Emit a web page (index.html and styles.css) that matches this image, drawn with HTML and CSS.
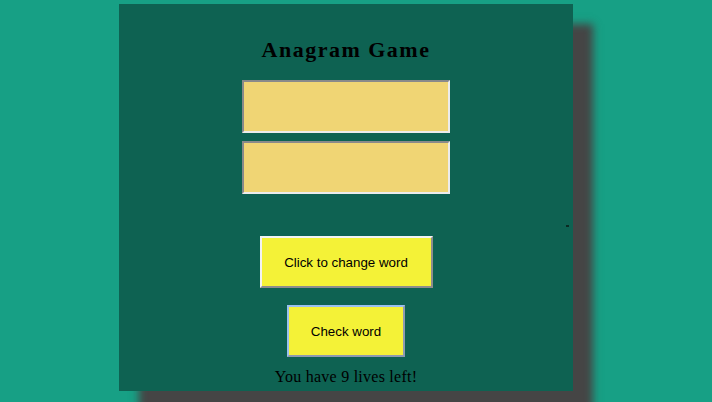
FILE: index.html
```html
<!DOCTYPE html>
<html>
<head>
<meta charset="utf-8">
<link rel="stylesheet" href="styles.css">
</head>
<body>
<div class="panel">
  <h1 class="title">Anagram Game</h1>
  <input class="field" type="text">
  <input class="field second" type="text">
  <button class="btn change">Click to change word</button>
  <button class="btn check">Check word</button>
  <p class="lives">You have 9 lives left!</p>
  <span class="dot"></span>
</div>
</body>
</html>
```
FILE: styles.css
```css
html, body {
  margin: 0;
  padding: 0;
}
body {
  background: #17a085;
  width: 712px;
  height: 402px;
  overflow: hidden;
  font-family: "Liberation Serif", "Times New Roman", serif;
}
.panel {
  position: relative;
  box-sizing: border-box;
  margin: 4px 0 0 119px;
  width: 454px;
  height: 387px;
  background: #0e6252;
  box-shadow: 20px 20px 8px #454545;
  display: flex;
  flex-direction: column;
  align-items: center;
  padding-top: 33px;
}
.title {
  margin: 0;
  font-size: 22px;
  line-height: 26px;
  font-weight: bold;
  letter-spacing: 1.5px;
  color: #000;
}
.field {
  box-sizing: border-box;
  margin: 17px 0 0 0;
  width: 208px;
  height: 53px;
  background: #f0d574;
  border: 2px solid;
  border-top-color: #8a8a8a;
  border-left-color: #8a8a8a;
  border-right-color: #ececec;
  border-bottom-color: #ececec;
  padding: 0;
}
.field.second {
  margin-top: 8px;
}
.btn {
  box-sizing: border-box;
  background: #f4f237;
  font-family: "Liberation Sans", Arial, sans-serif;
  font-size: 13.33px;
  color: #000;
  height: 52px;
  border: 2px solid;
  border-top-color: #f2f2f2;
  border-left-color: #f2f2f2;
  border-right-color: #8d8d8d;
  border-bottom-color: #8d8d8d;
  padding: 0;
}
.change {
  margin-top: 42px;
  width: 173px;
}
.check {
  margin-top: 17px;
  width: 118px;
  border-top-color: #9ac0f0;
  border-left-color: #9ac0f0;
  border-right-color: #8d9bb0;
  border-bottom-color: #8d9bb0;
}
.lives {
  margin: 11px 0 0 0;
  font-size: 16px;
  line-height: 18px;
  letter-spacing: 0.25px;
  color: #000;
}
.dot {
  position: absolute;
  left: 447px;
  top: 221px;
  width: 3px;
  height: 2px;
  background: #0a2a22;
}
```
